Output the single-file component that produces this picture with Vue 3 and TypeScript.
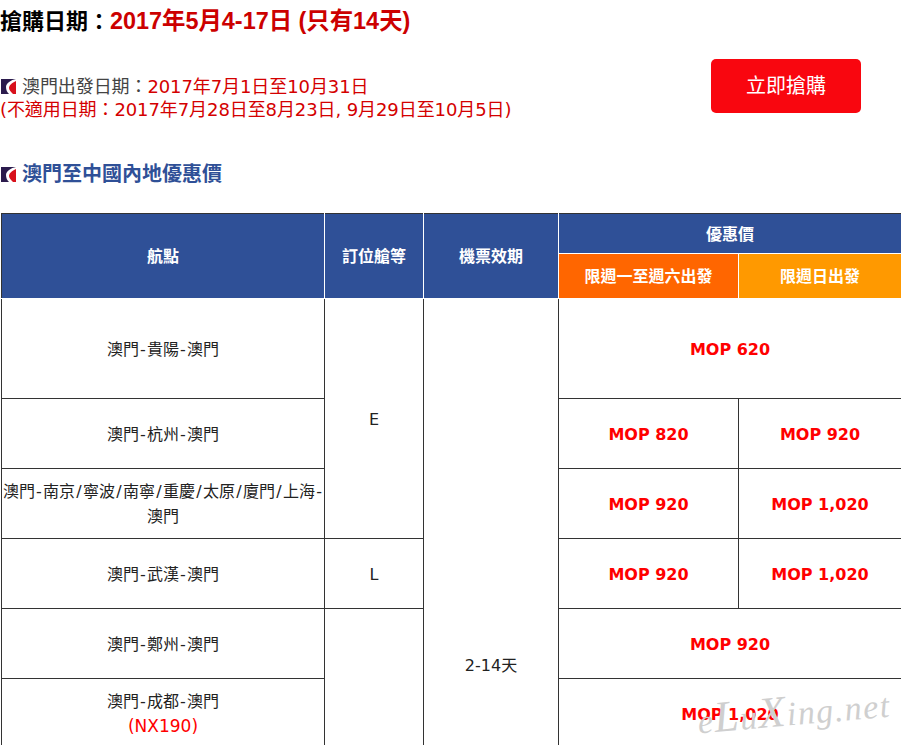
<script setup lang="ts">
interface Row {
  route: string
  note?: string
  cabin?: { label: string; span: number }
  prices: string[]
}
const rows: Row[] = [
  { route: '澳門-貴陽-澳門', cabin: { label: 'E', span: 3 }, prices: ['MOP 620'] },
  { route: '澳門-杭州-澳門', prices: ['MOP 820', 'MOP 920'] },
  { route: '澳門-南京/寧波/南寧/重慶/太原/廈門/上海-澳門', prices: ['MOP 920', 'MOP 1,020'] },
  { route: '澳門-武漢-澳門', cabin: { label: 'L', span: 1 }, prices: ['MOP 920', 'MOP 1,020'] },
  { route: '澳門-鄭州-澳門', cabin: { label: '', span: 3 }, prices: ['MOP 920'] },
  { route: '澳門-成都-澳門', note: '(NX190)', prices: ['MOP 1,020'] },
]
const parts = (route: string): string[] => route.split(/([-/])/)
const isSep = (part: string): boolean => part === '-' || part === '/'
const isTwoLines = (row: Row): boolean => Boolean(row.note) || row.route.length > 10
</script>

<template>
  <main class="page">
    <h1 class="title">搶購日期：<span class="title-red">2017年5月4-17日 (只有14天)</span></h1>

    <section class="info">
      <div class="dates">
        <p class="line">
          <svg class="mark" viewBox="0 0 15 15"><rect width="15" height="15" fill="#2b1b4d" /><path d="M15 0 C10 1 5 4 5 8 C5 11 6 13 8 15 L15 15 Z" fill="#fff" /><path d="M15 2 C11 4 8 6 8 9 C8 11 10 13 12 15 L15 15 Z" fill="#d8111c" /></svg><span class="dark">澳門出發日期：</span><span class="red">2017年7月1日至10月31日</span>
        </p>
        <p class="line red">(不適用日期：2017年7月28日至8月23日, 9月29日至10月5日)</p>
      </div>
      <a class="buy">立即搶購</a>
    </section>

    <h2 class="subtitle">
      <svg class="mark" viewBox="0 0 15 15"><rect width="15" height="15" fill="#2b1b4d" /><path d="M15 0 C10 1 5 4 5 8 C5 11 6 13 8 15 L15 15 Z" fill="#fff" /><path d="M15 2 C11 4 8 6 8 9 C8 11 10 13 12 15 L15 15 Z" fill="#d8111c" /></svg><span>澳門至中國內地優惠價</span>
    </h2>

    <table class="fares">
      <colgroup>
        <col class="c1" /><col class="c2" /><col class="c3" /><col class="c4" /><col class="c5" />
      </colgroup>
      <thead>
        <tr class="h1">
          <th rowspan="2">航點</th>
          <th rowspan="2">訂位艙等</th>
          <th rowspan="2">機票效期</th>
          <th colspan="2">優惠價</th>
        </tr>
        <tr class="h2">
          <th class="orange">限週一至週六出發</th>
          <th class="amber">限週日出發</th>
        </tr>
      </thead>
      <tbody>
        <tr v-for="(row, i) in rows" :key="row.route" :class="i === 0 ? 'tall' : 'std'">
          <td :class="{ route: isTwoLines(row) }">
            <template v-for="(part, j) in parts(row.route)" :key="j"><span v-if="isSep(part)" class="sep">{{ part }}</span><template v-else>{{ part }}</template></template>
            <template v-if="row.note"><br /><span class="note">{{ row.note }}</span></template>
          </td>
          <td v-if="row.cabin" :rowspan="row.cabin.span">{{ row.cabin.label }}</td>
          <td v-if="i === 0" rowspan="7">2-14天</td>
          <td v-for="p in row.prices" :key="p" class="price" :colspan="row.prices.length === 1 ? 2 : 1">{{ p }}</td>
        </tr>
        <tr class="filler"><td></td><td></td><td colspan="2"></td></tr>
      </tbody>
    </table>
    <div class="watermark">e<span class="big">L</span>u<span class="big">X</span>ing.net</div>
  </main>
</template>

<style scoped>
.page {
  position: relative;
  width: 901px;
  font-family: "DejaVu Sans", "Noto Sans CJK TC", sans-serif;
  color: #333;
}
.title {
  margin: 0;
  height: 42px;
  line-height: 42px;
  font-size: 22px;
  font-weight: 700;
  color: #000;
  font-family: "Liberation Sans", "Noto Sans CJK TC", sans-serif;
}
.title-red { color: #cc0000; font-size: 23.4px; }
.info {
  display: flex;
  justify-content: space-between;
  align-items: flex-start;
  height: 103px;
  padding-top: 17px;
  padding-right: 40px;
}
.dates { padding-top: 16px; }
.line {
  margin: 0;
  height: 23px;
  line-height: 23px;
  font-size: 18px;
  letter-spacing: -0.09px;
  white-space: nowrap;
}
.mark {
  width: 15px;
  height: 15px;
  margin: 0 6px 0 1px;
  vertical-align: -1px;
  flex: none;
}
.dark { color: #444; }
.red { color: #d40000; }
.buy {
  display: block;
  width: 150px;
  height: 54px;
  line-height: 54px;
  border-radius: 5px;
  background: #f9060f;
  color: #fff;
  text-align: center;
  font-size: 20px;
}
.subtitle {
  display: flex;
  align-items: center;
  margin: -2px 0 0;
  height: 28px;
  line-height: 28px;
  font-size: 20px;
  font-weight: 700;
  color: #2f5097;
}
.fares {
  margin-top: 25px;
  border-collapse: collapse;
  table-layout: fixed;
  width: 900px;
  margin-left: 1px;
  font-size: 16px;
  color: #222;
}
.c1 { width: 323px; }
.c2 { width: 99px; }
.c3 { width: 135px; }
.c4 { width: 180px; }
.c5 { width: 163px; }
th {
  background: #2f5097;
  color: #fff;
  font-size: 16px;
  font-weight: 700;
  border: 1px solid #fff;
  border-top-color: #333;
  padding: 0 0 2px;
  text-align: center;
}
th:first-child { border-left-color: #333; }
.h1 { height: 40px; }
.h2 { height: 45px; }
.h2 th { border-top-color: #fff; }
.orange { background: #ff6600; }
.amber { background: #ff9900; }
td {
  border: 1px solid #333;
  text-align: center;
  padding: 2px 0 0;
  line-height: 25px;
}
.tall { height: 100px; }
.std { height: 70px; }
.filler { height: 282px; }
td.route { padding-top: 0; }
.sep {
  display: inline-block;
  width: 8px;
  text-align: center;
}
.note { color: #f00; font-size: 17px; }
.price {
  color: #f00;
  font-weight: 700;
}
.watermark {
  position: absolute;
  left: 697px;
  top: 685px;
  font-family: "Liberation Serif", serif;
  font-style: italic;
  font-size: 34px;
  letter-spacing: 1.5px;
  color: #cfcfcf;
  transform: rotate(-5deg);
  white-space: nowrap;
}
.big { font-size: 44px; }
</style>

<style>
html, body { overflow: hidden; background: #fff; }
</style>
